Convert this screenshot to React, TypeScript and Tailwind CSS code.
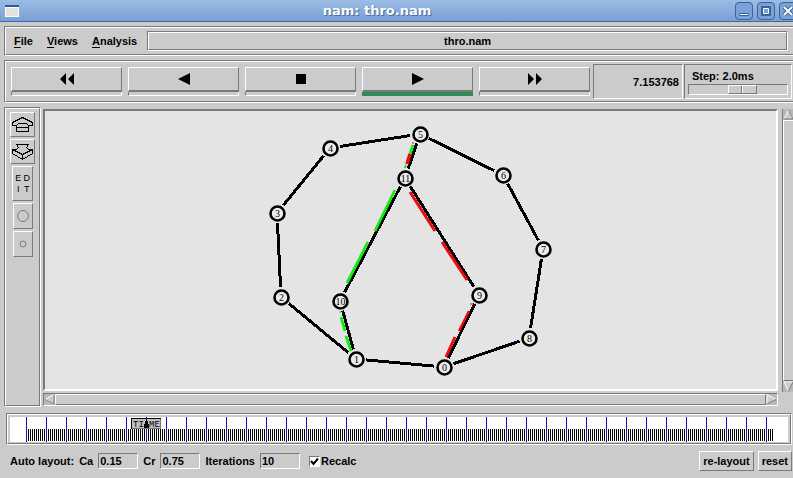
import { useState } from 'react';
import type { ReactNode } from 'react';

const NODES = [
  { id: 0, x: 444, y: 367 },
  { id: 1, x: 356, y: 359 },
  { id: 2, x: 281, y: 297 },
  { id: 3, x: 277, y: 213 },
  { id: 4, x: 330, y: 148 },
  { id: 5, x: 420, y: 134 },
  { id: 6, x: 503, y: 175 },
  { id: 7, x: 543, y: 249 },
  { id: 8, x: 529, y: 338 },
  { id: 9, x: 479, y: 295 },
  { id: 10, x: 340, y: 301 },
  { id: 11, x: 405, y: 178 },
];

const LINKS = [
  [0, 1], [1, 2], [2, 3], [3, 4], [4, 5], [5, 6], [6, 7],
  [7, 8], [8, 0], [0, 9], [9, 11], [11, 5], [11, 10], [10, 1],
];

const GREEN = '#14eb14';
const RED = '#eb0a0f';

// packets in flight: start and end points, colour, thickness
const PACKETS = [
  { x1: 395, y1: 190, x2: 375, y2: 231, color: GREEN, w: 2.8 },
  { x1: 368, y1: 242, x2: 347, y2: 283, color: GREEN, w: 2.8 },
  { x1: 339, y1: 312, x2: 341, y2: 312, color: GREEN, w: 1 },
  { x1: 341, y1: 317, x2: 345, y2: 331, color: GREEN, w: 2.8 },
  { x1: 346, y1: 336, x2: 351, y2: 351, color: GREEN, w: 2.8 },
  { x1: 410, y1: 192, x2: 435, y2: 231, color: RED, w: 3 },
  { x1: 442, y1: 242, x2: 467, y2: 280, color: RED, w: 3 },
  { x1: 470, y1: 304, x2: 473, y2: 304, color: RED, w: 1 },
  { x1: 469, y1: 311, x2: 459, y2: 331, color: RED, w: 2.4 },
  { x1: 455, y1: 337, x2: 446, y2: 357, color: RED, w: 3 },
  { x1: 412, y1: 143, x2: 414, y2: 143, color: RED, w: 1 },
  { x1: 413, y1: 145, x2: 410, y2: 154, color: GREEN, w: 2.8 },
  { x1: 410, y1: 154, x2: 407, y2: 164, color: RED, w: 3.6 },
  { x1: 406, y1: 165, x2: 405, y2: 168, color: GREEN, w: 2 },
];

const NODE_GAP = 10;

function Link({ from, to }: { from: number; to: number }) {
  const a = NODES[from];
  const b = NODES[to];
  const len = Math.hypot(b.x - a.x, b.y - a.y);
  const dx = ((b.x - a.x) / len) * NODE_GAP;
  const dy = ((b.y - a.y) / len) * NODE_GAP;
  return (
    <line
      x1={a.x + dx}
      y1={a.y + dy}
      x2={b.x - dx}
      y2={b.y - dy}
      stroke="#000"
      strokeWidth="3"
      shapeRendering="crispEdges"
    />
  );
}

function Topology() {
  return (
    <svg viewBox="45 111 731 278" className="block h-[278px] w-full">
      {LINKS.map(([from, to]) => (
        <Link key={`${from}-${to}`} from={from} to={to} />
      ))}
      {PACKETS.map((p, i) => (
        <line key={i} x1={p.x1} y1={p.y1} x2={p.x2} y2={p.y2} stroke={p.color} strokeWidth={p.w} />
      ))}
      {NODES.map((n) => (
        <g key={n.id}>
          <circle cx={n.x + 0.5} cy={n.y + 0.5} r="7" fill="#ececec" stroke="#000" strokeWidth="2.6" />
          <text
            x={n.x + 0.5}
            y={n.y + 4}
            textAnchor="middle"
            className="font-['Liberation_Serif',serif] text-[10px] font-normal"
          >
            {n.id}
          </text>
        </g>
      ))}
    </svg>
  );
}

// Transport button with the active strip under it
function PlayButton({ label, active, onClick, children }: {
  label: string;
  active: boolean;
  onClick: () => void;
  children: ReactNode;
}) {
  return (
    <div className="flex flex-1 flex-col">
      <button
        aria-label={label}
        onClick={onClick}
        className="flex h-[25px] items-center justify-center border border-b-2 border-white border-r-[#7a7a7a] border-b-[#7a7a7a]"
      >
        <svg width="16" height="12" viewBox="0 0 16 12">{children}</svg>
      </button>
      <div
        className={
          active
            ? 'h-1 bg-[#2e8b57]'
            : 'h-1 border border-t-0 border-white border-l-[#7a7a7a]'
        }
      />
    </div>
  );
}

const TRANSPORT = [
  { label: 'Rewind', icon: <path d="M7 0v12L1 6zM15 0v12L9 6z" /> },
  { label: 'Play backward', icon: <path d="M14 0v12L2 6z" /> },
  { label: 'Stop', icon: <path d="M3 1h10v10H3z" /> },
  { label: 'Play forward', icon: <path d="M2 0v12l12-6z" /> },
  { label: 'Fast forward', icon: <path d="M1 0v12l6-6zM9 0v12l6-6z" /> },
];

function SideButton({ label, className, children }: {
  label: string;
  className: string;
  children: ReactNode;
}) {
  return (
    <button
      aria-label={label}
      className={`flex shrink-0 items-center justify-center border border-white border-r-[#7a7a7a] border-b-[#7a7a7a] ${className}`}
    >
      {children}
    </button>
  );
}

function WindowButton({ label, children }: { label: string; children: ReactNode }) {
  return (
    <button aria-label={label} className="size-[18px] rounded-[4px] border border-[#3a629b] bg-[#7ba2d4]">
      <svg width="16" height="16" viewBox="0 0 16 16" fill="none">{children}</svg>
    </button>
  );
}

function Menu({ name }: { name: string }) {
  return (
    <button>
      <span className="underline underline-offset-2">{name[0]}</span>
      {name.slice(1)}
    </button>
  );
}

function Field({ label, value }: { label: string; value: string }) {
  return (
    <label className="flex items-center gap-[5px]">
      {label}
      <input
        defaultValue={value}
        className="h-4 w-10 border border-[#7a7a7a] border-r-white border-b-white bg-transparent px-px outline-none"
      />
    </label>
  );
}

function Arrow({ label, d, light }: { label: string; d: string; light: string }) {
  return (
    <button aria-label={label} className="size-[11px] shrink-0 bg-[#b8b8b8]">
      <svg width="11" height="11" viewBox="0 0 11 11" fill="none">
        <path d={light} fill="#cbcbcb" stroke="#fff" />
        <path d={d} stroke="#7a7a7a" />
      </svg>
    </button>
  );
}

function Timeline() {
  const ticks = Array.from({ length: 373 }, (_, i) => 18 + i * 2);
  const marks = Array.from({ length: 38 }, (_, i) => 16 + i * 20);
  return (
    <svg className="block h-[25px] w-full bg-white" shapeRendering="crispEdges">
      {ticks.map((x) => (
        <rect key={x} x={x} y="12" width="1" height="12" />
      ))}
      {marks.map((x) => (
        <rect key={x} x={x} y="0" width="1" height="25" fill="#1414b4" />
      ))}
      <rect x="121.5" y="1.5" width="29" height="10" fill="#c0c0c0" stroke="#000" />
      <path d="M122 11h28M150 2v10" stroke="#777" />
      <text x="123" y="10" className="font-['Liberation_Mono',monospace] text-[9px] font-normal">TI</text>
      <text x="139" y="10" className="font-['Liberation_Mono',monospace] text-[9px] font-normal">ME</text>
      <path d="M136 2v2h-1v3h-1v4h5V7h-1V4h-1V2z" />
    </svg>
  );
}

export default function App() {
  const [active, setActive] = useState(3);

  return (
    <div className="overflow-hidden bg-[#cbcbcb] pb-[7px] font-['Liberation_Sans',Arial,sans-serif] text-[11px] leading-[14px] font-bold text-black">
      {/* Title bar */}
      <header className="flex h-[22px] items-center border-b border-[#4169b0] bg-linear-to-b from-[#9bbce6] to-[#7aa0d2] pl-[5px]">
        <svg width="14" height="12" viewBox="0 0 14 12">
          <path d="M0 0h14v12H0z" fill="#fff" />
          <path d="M0 0h14v2H0z" fill="#2d5c99" />
          <path d="M1 3h12v8H1z" fill="#e4e2dc" />
        </svg>
        <h1 className="flex-1 text-center font-['DejaVu_Sans',sans-serif] text-[13px] text-white [text-shadow:1px_1px_1px_#41639a]">
          nam: thro.nam
        </h1>
        <div className="-mr-1 flex gap-1">
          <WindowButton label="Minimize">
            <path d="M3.5 10.5h9v2h-9z" fill="#fff" stroke="#3a629b" />
          </WindowButton>
          <WindowButton label="Maximize">
            <path d="M4.5 4.5h7v7h-7z" stroke="#3a629b" strokeWidth="3" />
            <path d="M5.5 5.5h5v5h-5z" stroke="#fff" />
          </WindowButton>
          <WindowButton label="Close">
            <path d="M4 4l8 8M12 4l-8 8" stroke="#3a629b" strokeWidth="4" />
            <path d="M4 4l8 8M12 4l-8 8" stroke="#fff" strokeWidth="2" />
          </WindowButton>
        </div>
      </header>

      <div className="flex flex-col gap-1 pt-1 pl-1">
        {/* Menu bar */}
        <div className="border border-r-0 border-[#7a7a7a] border-b-white">
          <nav className="flex h-7 items-center border border-r-0 border-white border-b-[#7a7a7a] pr-[5px] pl-2">
            <div className="flex gap-[14px] pr-2.5">
              <Menu name="File" />
              <Menu name="Views" />
              <Menu name="Analysis" />
            </div>
            <div className="flex-1 border border-[#7a7a7a] border-r-white border-b-white">
              <div className="h-[18px] border border-white border-r-[#7a7a7a] border-b-[#7a7a7a] text-center leading-4">
                thro.nam
              </div>
            </div>
          </nav>
        </div>

        {/* Transport controls */}
        <div className="border border-r-0 border-[#7a7a7a] border-b-white">
          <div className="flex h-[41px] border border-r-0 border-white border-b-[#7a7a7a] pt-0.5 pr-px pb-0.5 pl-[5px]">
            <div className="flex flex-1 gap-1.5 pt-[3px] pr-[3px]">
              {TRANSPORT.map((t, i) => (
                <PlayButton key={t.label} label={t.label} active={i === active} onClick={() => setActive(i)}>
                  {t.icon}
                </PlayButton>
              ))}
            </div>
            <output className="flex w-[90px] items-center justify-end border border-[#7a7a7a] border-r-white border-b-white pr-[3px]">
              7.153768
            </output>
            <label className="ml-px flex w-[108px] flex-col justify-between border border-[#7a7a7a] border-r-white border-b-white pt-1 pr-[3px] pb-[3px] pl-[3px]">
              <span className="pl-1">Step: 2.0ms</span>
              <input
                type="range"
                defaultValue={57}
                className="h-[11px] w-full appearance-none border border-[#7a7a7a] border-r-white border-b-white bg-transparent [&::-webkit-slider-thumb]:h-[9px] [&::-webkit-slider-thumb]:w-[29px] [&::-webkit-slider-thumb]:appearance-none [&::-webkit-slider-thumb]:border [&::-webkit-slider-thumb]:border-white [&::-webkit-slider-thumb]:border-r-[#7a7a7a] [&::-webkit-slider-thumb]:border-b-[#7a7a7a] [&::-webkit-slider-thumb]:bg-[linear-gradient(90deg,#cbcbcb_12px,#7a7a7a_12px,#7a7a7a_13px,#fff_13px,#fff_14px,#cbcbcb_14px)]"
              />
            </label>
          </div>
        </div>

        <div className="flex gap-0.5">
          {/* Tools */}
          <aside className="border border-[#7a7a7a] border-r-white border-b-white">
            <div className="flex h-full w-[35px] flex-col items-center gap-0.5 border border-white border-r-[#7a7a7a] border-b-[#7a7a7a] pt-[3px]">
              <SideButton label="Zoom in" className="h-[25px] w-[25px]">
                <svg width="23" height="18" viewBox="0 0 23 18" fill="none" stroke="#000" shapeRendering="crispEdges">
                  <path d="M11.5 1.5L1.5 6.5V9.5H5.5L7.5 7.5H15.5L17.5 9.5H21.5V6.5zM5.5 9.5V15.5H17.5V9.5M5.5 11.5H17.5" />
                </svg>
              </SideButton>
              <SideButton label="Zoom out" className="h-[25px] w-[25px]">
                <svg width="23" height="18" viewBox="0 0 23 18" fill="none" stroke="#000" shapeRendering="crispEdges">
                  <path d="M1.5 6.5H5.5L7.5 4.5L5.5 1.5H17.5L15.5 4.5L17.5 6.5H21.5L11.5 11.5zM1.5 6.5V10.5L11.5 16.5L21.5 10.5V6.5M11.5 11.5V16.5" />
                </svg>
              </SideButton>
              <SideButton label="Edit" className="h-[35px] w-[21px]">
                <span className="grid grid-cols-2 gap-x-0.5 text-[9px] leading-[11px] font-normal">
                  <span>E</span>
                  <span>D</span>
                  <span>I</span>
                  <span>T</span>
                </span>
              </SideButton>
              <SideButton label="Larger nodes" className="h-[26px] w-5">
                <svg width="14" height="14" viewBox="0 0 14 14" fill="none" stroke="#7a7a7a">
                  <circle cx="7" cy="7" r="5.5" />
                </svg>
              </SideButton>
              <SideButton label="Smaller nodes" className="h-[26px] w-5">
                <svg width="14" height="14" viewBox="0 0 14 14" fill="none" stroke="#7a7a7a">
                  <circle cx="7" cy="7" r="3" />
                </svg>
              </SideButton>
            </div>
          </aside>

          {/* Topology view */}
          <main className="flex flex-1 flex-col gap-0.5 pt-0.5 pb-px">
            <div className="border-2 border-[#7a7a7a] border-r-white border-b-white bg-[#e4e4e4]">
              <Topology />
            </div>
            <div className="flex border border-[#7a7a7a] border-r-white border-b-white">
              <Arrow label="Scroll left" d="M10 0.5V10L1 5.5" light="M10 10L1 5.5L10 0.5" />
              <div className="flex-1 border border-white border-r-[#7a7a7a] border-b-[#7a7a7a]" />
              <Arrow label="Scroll right" d="M1 10L10 5.5" light="M10 5.5L1 0.5V10" />
            </div>
          </main>
          <div className="mt-0.5 ml-0.5 flex w-[11px] flex-col self-start border-l border-[#7a7a7a]">
            <Arrow label="Scroll up" d="M1 10H10L5.5 1" light="M10 10L5.5 1L1 10" />
            <div className="h-[261px] border border-r-0 border-white border-b-[#7a7a7a]" />
            <Arrow label="Scroll down" d="M10 1L5.5 10" light="M5.5 10L1 1H10" />
          </div>
        </div>
      </div>

      {/* Timeline */}
      <div className="mt-1.5 mr-px ml-1.5 border border-[#7a7a7a] border-r-white border-b-white">
        <div className="border border-white border-r-[#7a7a7a] border-b-[#7a7a7a] px-0.5 pt-0.5 pb-px">
          <Timeline />
        </div>
      </div>

      {/* Layout settings */}
      <form className="mr-px flex items-center gap-1 pt-1.5 pl-2.5" onSubmit={(e) => e.preventDefault()}>
        <div className="flex flex-1 items-center gap-[5px]">
          <span>Auto layout:</span>
          <Field label="Ca" value="0.15" />
          <Field label="Cr" value="0.75" />
          <Field label="Iterations" value="10" />
          <label className="flex items-center gap-px pl-1">
            <input
              type="checkbox"
              defaultChecked
              className="peer size-[11px] appearance-none border border-[#7a7a7a] border-r-white border-b-white bg-white checked:bg-[url('data:image/svg+xml,%3Csvg%20xmlns=%22http://www.w3.org/2000/svg%22%20viewBox=%220%200%209%209%22%3E%3Cpath%20d=%22M1%204l2.500%203L8%201.500%22%20fill=%22none%22%20stroke=%22black%22%20stroke-width=%222%22/%3E%3C/svg%3E')]"
            />
            Recalc
          </label>
        </div>
        <button className="h-5 border border-white border-r-[#7a7a7a] border-b-[#7a7a7a] px-[3px]">re-layout</button>
        <button className="h-5 border border-white border-r-[#7a7a7a] border-b-[#7a7a7a] px-[3px]">reset</button>
      </form>
    </div>
  );
}
